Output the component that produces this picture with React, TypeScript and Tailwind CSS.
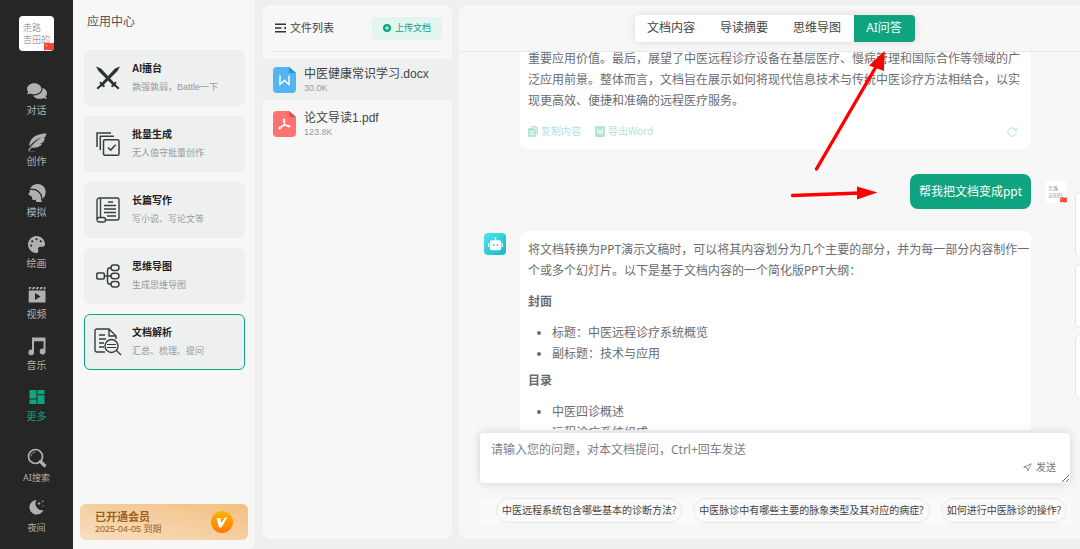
import type { ReactNode } from "react";
import { FaPalette, FaComments } from "react-icons/fa";
import { RiRobot2Fill } from "react-icons/ri";
import { Navigation } from "lucide-react";

const cjk = "font-['Noto_Sans','Noto_Sans_CJK_SC',sans-serif]";

function Logo({ small = false }: { small?: boolean }) {
  return (
    <div
      aria-label="logo"
      className={
        small
          ? "relative flex h-[22px] w-[22px] shrink-0 flex-col justify-center rounded-sm bg-white pl-[3px] text-[5px] leading-[7px] font-light text-[#777]"
          : "relative flex h-[35px] w-[35px] shrink-0 flex-col justify-center rounded bg-white pl-1 text-[9px] leading-[12px] font-light text-[#777]"
      }
    >
      <span>走路</span>
      <span>吉田的</span>
      <svg
        viewBox="0 0 10 9"
        className={small ? "absolute right-0 bottom-0 h-[6px] w-[7px]" : "absolute right-0 bottom-0 h-[9px] w-[10px]"}
      >
        <path d="M0 1.2Q2.5-.2 5 .8T10 .5V7.6Q7.5 8.8 5 8T0 8.4Z" fill="#f4433c" />
        <path d="m2.4 2 .4 1h1l-.8.7.3 1-.9-.6-.9.6.3-1L1 3h1z" fill="#ffb04a" />
      </svg>
    </div>
  );
}

function Feather() {
  return (
    <svg viewBox="0 0 20 20" className="h-5 w-5" fill="currentColor">
      <path d="M19.5 1.5C13 1.3 7 3.6 4 8c-1.6 2.400-1.8 4.500-1.3 6.200C6 9.800 10 7 14.800 5 10.300 8 6 11.500 1 18.300l1.200.500L4.600 15.700c5 .500 8.600-.700 10.700-4l-2.300-.1 3.300-1.300c.8-1.500 1.200-2.800 1.500-4.100l-1.500-.3 2-1z" />
      <path d="M1 19h7v.600H1z" opacity=".5" />
    </svg>
  );
}

function Head() {
  return (
    <svg viewBox="0 0 20 20" className="h-5 w-5" fill="currentColor">
      <path d="M3 5.500C4.800 2.300 7.700 1 10.800 1c4.700.1 8 3.700 7.900 8-.1 3-1.300 5.100-3.300 6.900-.1-4.400-1.600-6.200-3.700-8C9.500 6.100 7 5.600 3 5.500z" />
      <path d="M2.700 6.700c4.100.100 6.200.700 8.200 2.300 2.400 2 3.400 4.100 3.300 8.200l1 1.800H9.300l-.4-2.300c-1.600.400-3.100.400-3.600-.2-.6-.8.100-1.900-.3-2.700L1.300 11.500l1.500-2.600z" />
    </svg>
  );
}

function Clapper() {
  return (
    <svg viewBox="0 0 20 20" className="h-5 w-5" fill="currentColor">
      <path d="M2 2h2.500L3 4.300H1.700zM6 2h2.300L7 4.300H4.800zM9.800 2h2.300l-1.300 2.300H8.600zM13.600 2h2.300l-1.300 2.300h-2.200zM17.300 2h1.200v2.300h-2.400z" />
      <path fillRule="evenodd" d="M1.700 5.500h16.800v12H1.700zM8 8v7l5.500-3.500z" />
    </svg>
  );
}

function Music() {
  return (
    <svg viewBox="0 0 20 20" className="h-5 w-5" fill="currentColor">
      <path d="M5 1.500h13.500v14a2.900 2.900 0 1 1-1.900-2.700V5.200H7v11.300a2.800 2.800 0 1 1-2-2.700z" />
    </svg>
  );
}

function Tiles() {
  return (
    <svg viewBox="0 0 20 20" className="h-5 w-5" fill="currentColor">
      <path d="M2.500 3h7v8.500h-7zM2.500 12.500h7V17h-7zM10.500 3h7v4.200h-7zM10.500 8.200h7V17h-7z" />
    </svg>
  );
}

function Search() {
  return (
    <svg viewBox="0 0 20 20" className="h-5 w-5" fill="none" stroke="currentColor">
      <circle cx="8.500" cy="8.500" r="7" strokeWidth="1.700" />
      <path d="M4 8.500A4.500 4.500 0 0 1 8.500 4" strokeWidth="1" opacity=".7" />
      <path d="m13.500 13.500 4 4" strokeWidth="3.200" strokeLinecap="round" />
    </svg>
  );
}

function Moon() {
  return (
    <svg viewBox="0 0 20 20" className="h-5 w-5" fill="currentColor">
      <path d="M9.500 2A7.300 7.300 0 1 0 16.500 12 6.600 6.600 0 0 1 9.500 2z" />
      <path d="m12 3.500.6 1.400 1.400.6-1.400.6-.6 1.400-.6-1.400-1.400-.6 1.400-.6zM15.700 2l.4.900.9.400-.9.400-.4.900-.4-.9-.9-.4.900-.4zM16 7l.3.700.7.300-.7.300-.3.700-.3-.7-.7-.3.700-.3z" />
    </svg>
  );
}

const nav: { label: string; icon: ReactNode; active?: boolean }[] = [
  { label: "对话", icon: <FaComments size={20} /> },
  { label: "创作", icon: <Feather /> },
  { label: "模拟", icon: <Head /> },
  { label: "绘画", icon: <FaPalette size={17} /> },
  { label: "视频", icon: <Clapper /> },
  { label: "音乐", icon: <Music /> },
  { label: "更多", icon: <Tiles />, active: true },
];

function Sidebar() {
  return (
    <nav className="flex w-[73px] shrink-0 flex-col items-center bg-[#262626] pt-4 text-[#b0b0b0]">
      <Logo />
      <div className="mt-[30px] flex flex-col">
        {nav.map((n) => (
          <button key={n.label} className={n.active ? "flex h-[51px] flex-col items-center text-[#10a37f]" : "flex h-[51px] flex-col items-center"}>
            <span className="flex h-5 items-center">{n.icon}</span>
            <span className="text-[10px] leading-[18px]">{n.label}</span>
          </button>
        ))}
      </div>
      <div className="mt-[10px] flex flex-col text-[9px] leading-5">
        <button className="flex h-[50px] flex-col items-center">
          <Search />
          <span>AI搜索</span>
        </button>
        <button className="flex flex-col items-center">
          <Moon />
          <span>夜间</span>
        </button>
      </div>
    </nav>
  );
}

const swords = (
  <svg viewBox="0 0 24 24" className="h-6 w-6" fill="#2f3336">
    <path d="M0 .500 5 2.500l13 14 2-1 .500 1.500-1 1.200L23.500 22 22 23.500l-3.800-3.600-1.700 1.300-1.500-.7 1-2L2.500 5z" />
    <path d="M24 .500 19 2.500 6 16.500l-2-1-.5 1.500 1 1.200L.500 22 2 23.500l3.800-3.600 1.700 1.300 1.500-.7-1-2L21.500 5z" />
  </svg>
);
const batch = (
  <svg viewBox="0 0 24 24" className="h-6 w-6" fill="none" stroke="#3a3d40" strokeWidth="1.500">
    <path d="M1 15V1h14M4.300 18V4.300H18" />
    <rect x="7.500" y="7.700" width="15.500" height="15.500" rx="1.500" />
    <path d="m12 15.500 2.700 2.600 5-5.300" />
  </svg>
);
const scroll = (
  <svg viewBox="0 0 24 26" className="h-[26px] w-6" fill="none" stroke="#3a3d40" strokeWidth="1.400">
    <path d="M3.500 1H21a2 2 0 0 1 2 2v18a2 2 0 0 1-2 2H9M3.500 1A2.500 2.500 0 0 0 1 3.500V22M4.500 1.500V20M12 5h5M8 8.500h12M8 12h12M8 15.500h12M11 19h9" />
    <rect x="1" y="20.500" width="8.500" height="4.500" rx="2.200" />
  </svg>
);
const mindmap = (
  <svg viewBox="0 0 24 24" className="h-6 w-6" fill="none" stroke="#3a3d40" strokeWidth="1.500">
    <rect x=".800" y="9" width="7.500" height="6" rx="1" />
    <rect x="15" y="1" width="8" height="5.500" rx="2.700" />
    <rect x="15" y="9.300" width="8" height="5.500" rx="2.700" />
    <rect x="15" y="17.500" width="8" height="5.500" rx="2.700" />
    <path d="M8 12h7M15 3.700h-1c-2 0-2.500 1-2.500 3v10.500c0 2 .5 3 2.500 3h1" />
  </svg>
);
const analyse = (
  <svg viewBox="0 0 28 28" className="-mx-0.5 h-7 w-7" fill="none" stroke="#3a3d40" strokeWidth="1.400">
    <path d="M11 24H3a2 2 0 0 1-2-2V3a2 2 0 0 1 2-2h12l7 7v3M15 1v7h7M5 7h6M5 11h7M5 15h5M5 19h5M22.500 22.500l4.500 4.500" />
    <circle cx="17.500" cy="18" r="6.500" />
    <path d="M13 16.500h9M13 19.500h9" strokeWidth="1" />
  </svg>
);

const apps = [
  { title: "AI擂台", desc: "孰强孰弱，Battle一下", icon: swords },
  { title: "批量生成", desc: "无人值守批量创作", icon: batch },
  { title: "长篇写作", desc: "写小说、写论文等", icon: scroll },
  { title: "思维导图", desc: "生成思维导图", icon: mindmap },
  { title: "文档解析", desc: "汇总、梳理、提问", icon: analyse, active: true },
];

function AppCenter() {
  return (
    <aside className="flex w-[182px] shrink-0 flex-col rounded-br-lg bg-[#f7f7f7] pt-3 pb-[9px]">
      <h1 className="pl-[14px] text-[12px] leading-5 text-[#555]">应用中心</h1>
      <div className="mt-[18px] flex flex-col gap-[10px] pr-[10px] pl-[11px] font-['Liberation_Sans','Noto_Sans_CJK_SC',sans-serif]">
        {apps.map((a) => (
          <button
            key={a.title}
            className={
              a.active
                ? "flex h-14 items-center rounded-md border border-[#10a37f] bg-[#eef0f0] pl-[11px] text-left"
                : "flex h-14 items-center rounded-md border border-[#eef0f0] bg-[#eef0f0] pl-[11px] text-left"
            }
          >
            <span className="flex w-6 justify-center">{a.icon}</span>
            <span className="ml-3 flex flex-col">
              <span className="text-[10px] leading-[18px] font-bold text-[#222]">{a.title}</span>
              <span className="text-[9px] leading-[18px] text-[#999]">{a.desc}</span>
            </span>
          </button>
        ))}
      </div>
      <div className="mt-auto mr-[7px] ml-[7px] flex h-9 items-center justify-between rounded-md bg-linear-to-tr from-[#f7dfc0] to-[#f2bf80] pr-[15px] pl-[15px] text-[#a05f1c]">
        <div>
          <div className="text-[11px] leading-[13px] font-bold">已开通会员</div>
          <div className="font-['Liberation_Sans','Noto_Sans_CJK_SC',sans-serif] text-[9px] leading-[12px]">2025-04-05 到期</div>
        </div>
        <svg viewBox="0 0 22 22" className="h-[22px] w-[22px]">
          <defs>
            <linearGradient id="vip" x2="0" y2="1">
              <stop stopColor="#ffb300" />
              <stop offset="1" stopColor="#ff7a00" />
            </linearGradient>
          </defs>
          <circle cx="11" cy="11" r="11" fill="url(#vip)" />
          <path d="M5.500 7h4l.6 5 3.200-4.300h-1.500L16.500 6 10.500 16.500H8z" fill="#fff" />
        </svg>
      </div>
    </aside>
  );
}

function FileIcon({ kind }: { kind: "doc" | "pdf" }) {
  const doc = kind === "doc";
  return (
    <svg viewBox="0 0 23 26" className="h-[26px] w-[23px] shrink-0">
      <path d="M4 0h12l7 6v16a4 4 0 0 1-4 4H4a4 4 0 0 1-4-4V4a4 4 0 0 1 4-4z" fill={doc ? "#54b4f2" : "#ff7272"} />
      <path d="M16 0l7 6h-5a2 2 0 0 1-2-2z" fill={doc ? "#2496d0" : "#e84a50"} />
      {doc ? (
        <path d="M7 8.500v9l4.500-4 4.500 4v-9" fill="none" stroke="#fff" strokeWidth="1.400" />
      ) : (
        <path d="M11 8c1.500 0 .8 3-.5 5.500S7 18.500 6 17.700s2-2.700 5-3.200 6-.2 5.800.9-3.300 0-4.800-2S9.800 8 11 8z" fill="none" stroke="#fff" strokeWidth="1.100" />
      )}
    </svg>
  );
}

function FilePanel() {
  return (
    <section className="mt-[5px] mb-[10px] ml-2 flex w-[189px] shrink-0 flex-col rounded-lg bg-[#f7f7f7]">
      <div className="mx-[10px] flex h-[47px] items-center justify-between border-b border-[#e6e8e8]">
        <h2 className="flex items-center gap-1 pl-0.5 text-[11px] text-[#444]">
          <svg viewBox="0 0 11 10" className="h-[10px] w-[11px]" stroke="#333" strokeWidth="1.500" fill="#333">
            <path d="M0 1.200h11M0 5h6.500M0 8.800h11" />
            <path d="M11 3.500v3L8.500 5z" stroke="none" />
          </svg>
          文件列表
        </h2>
        <button className="flex h-[23px] items-center gap-1 rounded-sm bg-[#e2f5ef] px-[11px] text-[9px] text-[#10a37f]">
          <svg viewBox="0 0 8 8" className="h-2 w-2">
            <circle cx="4" cy="4" r="4" fill="#10a37f" />
            <path d="M4 2v4M2 4h4" stroke="#fff" strokeWidth=".900" />
          </svg>
          上传文档
        </button>
      </div>
      <ul className="mt-[7px] flex flex-col gap-[3px] font-['Liberation_Sans','Noto_Sans_CJK_SC',sans-serif]">
        <li className="flex h-[41px] items-center gap-2 bg-[#eef0f0] pl-[10px]">
          <FileIcon kind="doc" />
          <div>
            <div className="text-[12px] leading-4 text-[#444]">中医健康常识学习.docx</div>
            <div className="text-[9px] leading-3 text-[#999]">30.0K</div>
          </div>
        </li>
        <li className="flex h-[41px] items-center gap-2 pl-[10px]">
          <FileIcon kind="pdf" />
          <div>
            <div className="text-[12px] leading-4 text-[#444]">论文导读1.pdf</div>
            <div className="text-[9px] leading-3 text-[#999]">123.8K</div>
          </div>
        </li>
      </ul>
    </section>
  );
}

function Messages() {
  return (
    <div className="h-0 grow overflow-hidden pr-[13px] pl-[25px] text-[12px] leading-[21px] text-[#6a6c70]">
      <div className="-mt-1 mr-9 ml-9 rounded-lg bg-white px-2 pb-[7px]">
        <p className="whitespace-nowrap">
          重要应用价值。最后，展望了中医远程诊疗设备在基层医疗、慢病管理和国际合作等领域的广
          <br />
          泛应用前景。整体而言，文档旨在展示如何将现代信息技术与传统中医诊疗方法相结合，以实
          <br />
          现更高效、便捷和准确的远程医疗服务。
        </p>
        <div className="mt-[10px] flex items-center gap-[14px] text-[10px] text-[#b5e3d5]">
          <button className="flex items-center gap-[3px]">
            <svg viewBox="0 0 10 11" className="h-[11px] w-[10px]" fill="currentColor">
              <path d="M3 0h5l2 2v6.500H8.500V2.500L7.500 1.500H3z" />
              <path fillRule="evenodd" d="M1 2h5.500L8 3.500V10a1 1 0 0 1-1 1H1a1 1 0 0 1-1-1V3a1 1 0 0 1 1-1zm.5 3v1h5V5zm0 2.500v1h5v-1z" />
            </svg>
            复制内容
          </button>
          <button className="flex items-center gap-[3px]">
            <svg viewBox="0 0 10 11" className="h-[11px] w-[10px]">
              <rect width="10" height="11" rx="1" fill="#b5e3d5" />
              <path d="m2 3 1.500 5L5 4l1.500 4L8 3" fill="none" stroke="#fff" />
            </svg>
            导出Word
          </button>
          <button aria-label="重新生成" className="mr-[6px] ml-auto">
            <svg viewBox="0 0 10 10" className="h-[10px] w-[10px]" fill="none" stroke="currentColor">
              <path d="M8.700 3A4.200 4.200 0 1 0 9.200 5.800M9.300.700V3.300H6.700" />
            </svg>
          </button>
        </div>
      </div>

      <div className="mt-[25px] flex items-center justify-end gap-[14px]">
        <div className="flex h-[35px] items-center rounded-lg bg-[#10a37f] px-[9px] text-white">帮我把文档变成ppt</div>
        <Logo small />
      </div>

      <div className="mt-[22px] mr-9 flex items-start gap-[14px]">
        <span className="mt-0.5 flex h-[22px] w-[22px] shrink-0 items-center justify-center rounded-sm bg-linear-to-br from-[#4be8ea] to-[#08b9c4] text-white">
          <RiRobot2Fill size={15} />
        </span>
        <div className="min-w-0 grow rounded-lg bg-white px-2 pt-2">
          <p className="whitespace-nowrap">
            将文档转换为PPT演示文稿时，可以将其内容划分为几个主要的部分，并为每一部分内容制作一
            <br />
            个或多个幻灯片。以下是基于文档内容的一个简化版PPT大纲：
          </p>
          <h3 className="mt-[10px] font-bold">封面</h3>
          <ul className="mt-[10px] list-disc pl-6">
            <li>标题：中医远程诊疗系统概览</li>
            <li>副标题：技术与应用</li>
          </ul>
          <h3 className="mt-[6px] font-bold">目录</h3>
          <ul className="mt-[10px] list-disc pl-6">
            <li>中医四诊概述</li>
            <li>远程诊疗系统组成</li>
          </ul>
        </div>
      </div>
    </div>
  );
}

const prompts = [
  "中医远程系统包含哪些基本的诊断方法?",
  "中医脉诊中有哪些主要的脉象类型及其对应的病症?",
  "如何进行中医脉诊的操作?",
];

function Chat() {
  return (
    <main className="relative mt-[5px] mb-[10px] ml-[7px] flex min-w-0 grow flex-col rounded-l-lg bg-[#f7f7f7]">
      <header className="flex h-[47px] items-center justify-center border-b border-[#e6e8e8] pl-[10px]">
        <div className="flex h-[27px] overflow-hidden rounded bg-white text-[12px] text-[#444] shadow-[0_0_8px_rgba(0,0,0,0.12)]">
          <button className="w-[73px]">文档内容</button>
          <button className="w-[73px]">导读摘要</button>
          <button className="w-[73px]">思维导图</button>
          <button className="w-[61px] bg-[#10a37f] text-white">AI问答</button>
        </div>
      </header>
      <Messages />
      <div className="relative mt-[3px] mr-[10px] ml-[21px] h-[50px]">
        <textarea
          aria-label="问题"
          placeholder="请输入您的问题，对本文档提问，Ctrl+回车发送"
          className="block h-full w-full resize rounded-sm bg-white px-[11px] py-[7px] text-[12px] leading-5 shadow-[0_0_10px_rgba(0,0,0,0.16)] outline-none placeholder:text-[#7d7f85]"
        />
        <button className="absolute right-[14px] bottom-[6px] flex items-center gap-1 text-[10px] leading-5 text-[#777]">
          <Navigation size={9} />
          发送
        </button>
      </div>
      <div className="mt-[15px] mr-[9px] mb-4 ml-5 flex justify-end gap-[11px] bg-[#fafafa] pr-1">
        {prompts.map((p) => (
          <button key={p} className="h-[25px] rounded-full border border-[#e8e8e8] px-[5px] text-[10px] whitespace-nowrap text-[#444]">
            {p}
          </button>
        ))}
      </div>
      <div className="absolute top-[187px] right-0 flex flex-col gap-[7px]">
        <div className="h-[65px] w-[5px] rounded-l-md border border-r-0 border-[#e4e6e6] bg-white" />
        <div className="h-[64px] w-[5px] rounded-l-md border border-r-0 border-[#e4e6e6] bg-white" />
        <div className="h-[64px] w-[5px] rounded-l-md border border-r-0 border-[#e4e6e6] bg-white" />
      </div>
      <svg viewBox="0 0 100 155" className="pointer-events-none absolute top-[40px] right-[190px] h-[155px] w-[100px]" fill="#f00" stroke="#f00">
        <path d="M26.500 124 87 20M2.500 150.500 70 148" strokeWidth="3.400" strokeLinecap="round" />
        <path d="M94.500 6 79 20.500l15 5.500zM87.500 147.500 67 141.500v13z" stroke="none" />
      </svg>
    </main>
  );
}

export default function App() {
  return (
    <div className={`flex h-screen min-h-[540px] overflow-hidden bg-[#eef0f0] ${cjk}`}>
      <Sidebar />
      <AppCenter />
      <FilePanel />
      <Chat />
    </div>
  );
}
